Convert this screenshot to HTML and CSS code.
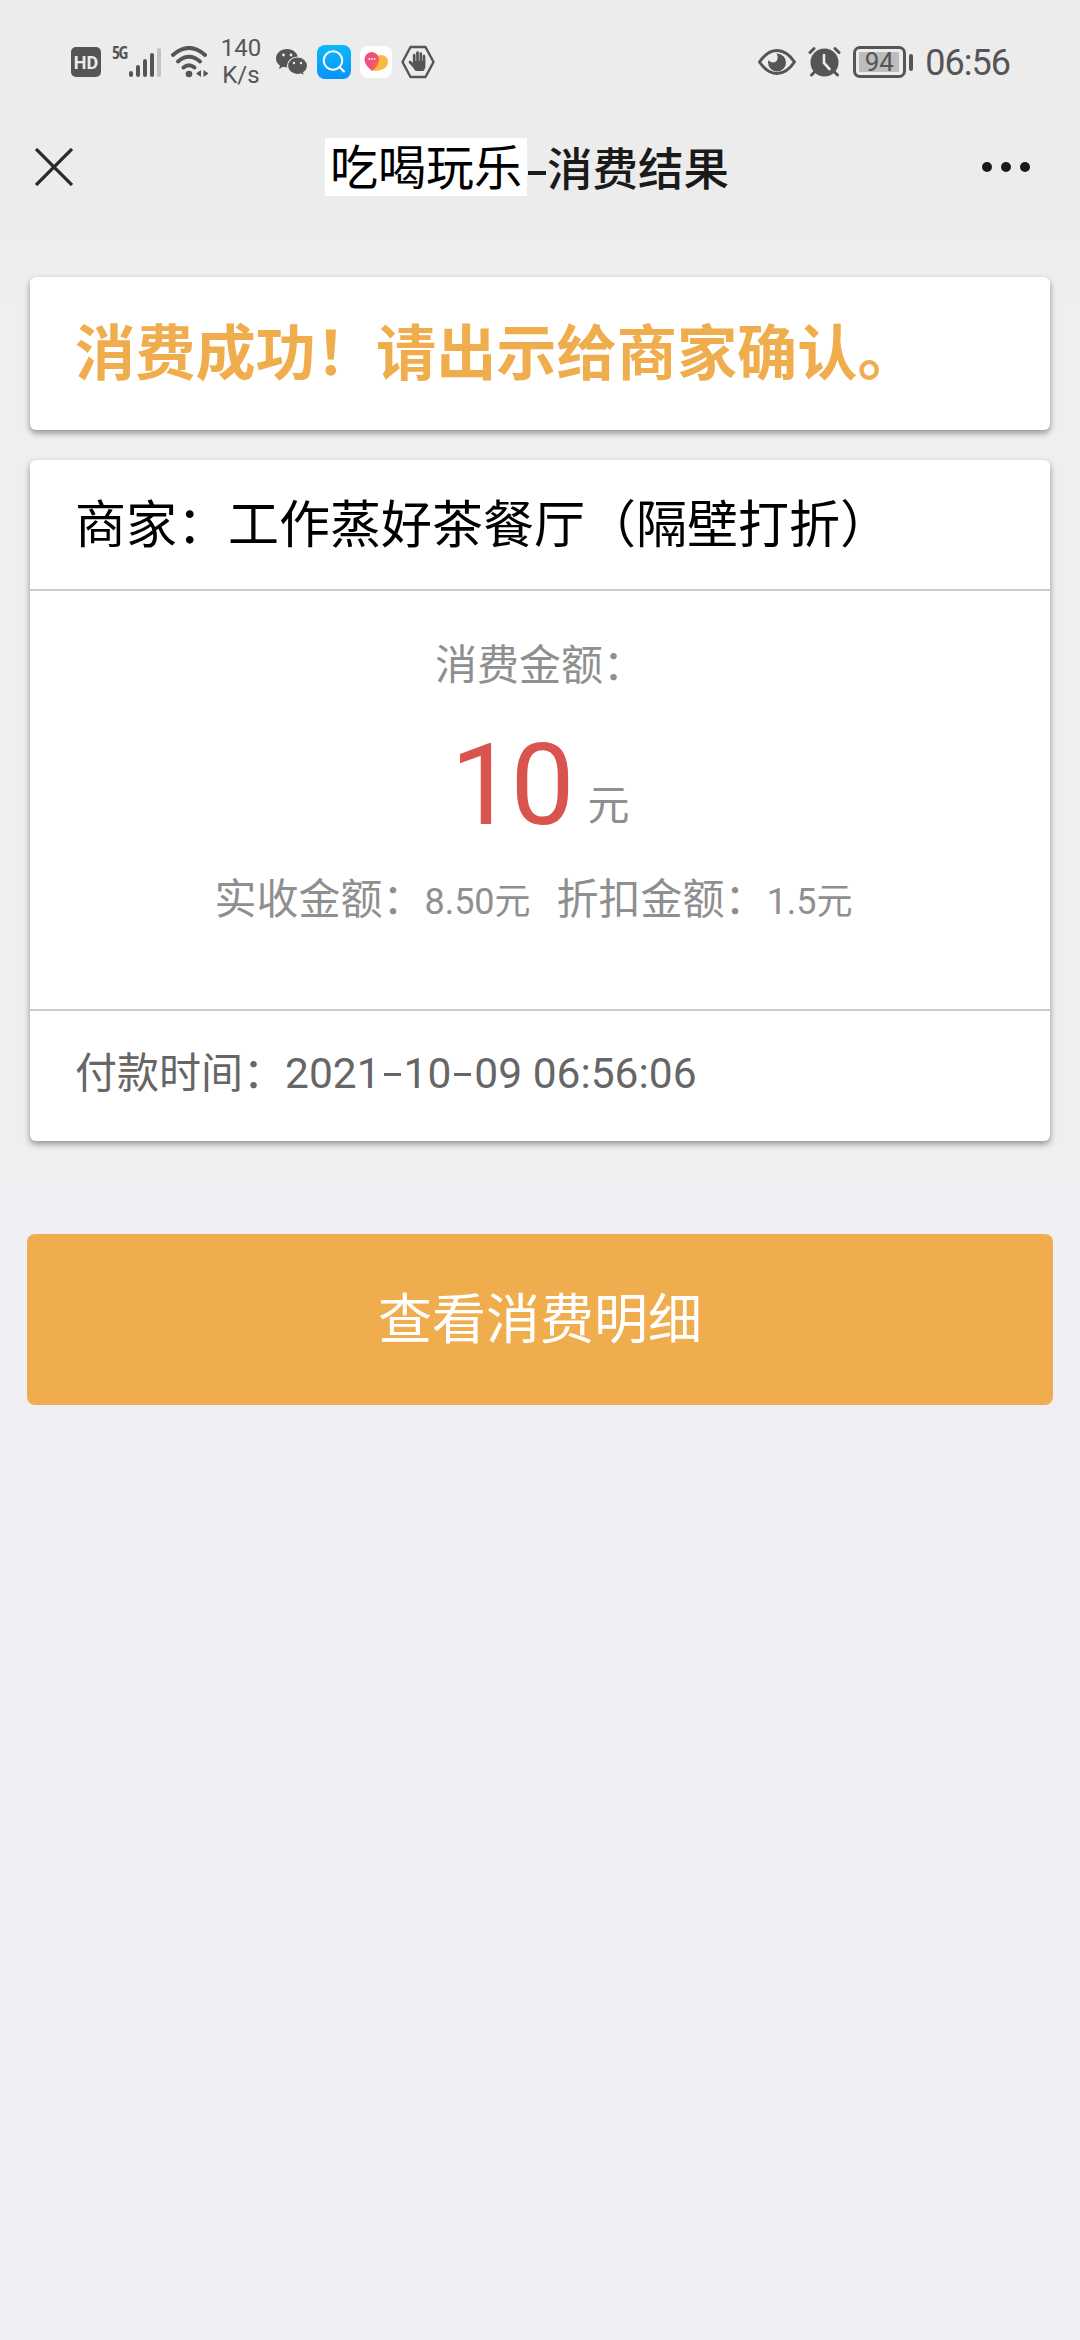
FILE: index.html
```html
<!doctype html>
<html lang="zh-CN">
	<head>
		<meta charset="utf-8">
		<title>吃喝玩乐-消费结果</title>
		<link rel="stylesheet" href="styles.css">
	</head>
	<body>
		<div class="statusbar">
			<div class="left">
				<div class="hd">HD</div>
				<div class="network">5G</div>
				<svg class="signal" width="34" height="32" viewBox="0 0 34 32">
					<g stroke="#555" stroke-width="4" stroke-linecap="round">
						<path d="M3 27v2M10 21v8M17 15v14M24 9v20"/>
						<path stroke="#c4c4c4" d="M31 4v25"/>
					</g>
				</svg>
				<svg class="wifi" width="38" height="32" viewBox="0 0 38 32">
					<g fill="none" stroke="#555" stroke-width="4" stroke-linecap="round">
						<path d="M2 9Q18 -5 34 9"/>
						<path d="M7 15.500Q18 6 29 15.500"/>
						<path d="M12.500 21.500Q18 17 23.500 21.500"/>
					</g>
					<circle cx="18" cy="28" r="3.300" fill="#555"/>
					<path fill="#555" d="M30 24v7l-5-3.500zM32.500 24v7l5-3.500z"/>
				</svg>
				<div class="speed">140<br>K/s</div>
				<svg class="wechat" width="32" height="28" viewBox="0 0 32 28">
					<path fill="#555" d="M11 1C5 1 0 5 0 10.500c0 3 1.500 5.500 4 7L3 21l4.200-2.200c1.200.4 2.500.5 3.800.5 6 0 11-4 11-9S17 1 11 1z"/>
					<path fill="#555" stroke="#ececec" stroke-width="1.200" d="M21.500 9C16 9 11.500 13 11.500 17.800s4.500 8.700 10 8.700c1.200 0 2.300-.2 3.400-.5l3.600 1.700-.8-3.100c2.300-1.700 3.800-4 3.800-6.800C31.500 13 27 9 21.500 9z"/>
					<g fill="#ececec">
						<circle cx="7.500" cy="7" r="1.400"/>
						<circle cx="15" cy="7" r="1.400"/>
						<circle cx="18" cy="15" r="1.200"/>
						<circle cx="25" cy="15" r="1.200"/>
					</g>
				</svg>
				<svg class="search" width="34" height="34" viewBox="0 0 34 34">
					<defs>
						<linearGradient id="blue" x2="0" y2="1">
							<stop stop-color="#0cb9f8"/>
							<stop offset="1" stop-color="#0793fa"/>
						</linearGradient>
					</defs>
					<rect width="34" height="34" rx="8" fill="url(#blue)"/>
					<g fill="none" stroke="#fff" stroke-width="2" stroke-linecap="round">
						<circle cx="16" cy="15.500" r="9.300"/>
						<path d="M22.500 22l4.500 4.500"/>
					</g>
				</svg>
				<svg class="heart" width="32" height="32" viewBox="0 0 32 32">
					<rect width="32" height="32" rx="8" fill="#fff"/>
					<path fill="#fcb93f" d="M14 25c9 0 14-4 14-9.500A6.500 6.500 0 0 0 21 9c-4 0-7 3-7 7z"/>
					<path fill="#ef5379" d="M12 25C6.500 20.500 4.500 16.500 4.500 13A7.500 7.500 0 0 1 12 6a7.500 7.500 0 0 1 7 7c0 4-2 8-7 12z"/>
					<path fill="#f56a3d" d="M12 25c4-3 6.700-8 7-12-3 1.500-5 4-6 7z"/>
					<path stroke="#fff" stroke-width="1.600" stroke-dasharray="1.600 1" d="M8.500 13h7"/>
				</svg>
				<svg class="hand" width="34" height="34" viewBox="0 0 34 34">
					<path fill="none" stroke="#555" stroke-width="2.400" stroke-linejoin="round" d="M9.500 2h15L32.500 17l-8 15h-15L1.500 17z"/>
					<g fill="none" stroke="#555" stroke-width="2.700" stroke-linecap="round">
						<path d="M13.200 17V10M16.500 17V7.500M19.800 17V8.500M23 17v-6M9 17l5 5.500"/>
					</g>
					<path fill="#555" d="M11.900 16h12.500v5c0 2.300-1 3.800-2 5h-7.500c-1.200-1-2.300-2.600-3-4z"/>
				</svg>
			</div>
			<div class="right">
				<svg class="eye" width="38" height="28" viewBox="0 0 38 28">
					<path fill="none" stroke="#555" stroke-width="3" stroke-linejoin="round" d="M1.500 14C7 6 12.500 2.500 19 2.500S31 6 36.500 14C31 22 25.500 25.500 19 25.500S7 22 1.500 14z"/>
					<circle cx="19" cy="14.500" r="9" fill="#555"/>
					<path fill="#ececec" d="M10 11.500c.5-3 3.500-6 7-7 3 1.500 3.500 6 1.500 8.500-2.500 2.500-6.500 1.500-8.500-1.500z"/>
				</svg>
				<svg class="alarm" width="33" height="31" viewBox="0 0 33 31">
					<circle cx="16.500" cy="16.500" r="14" fill="#555"/>
					<g fill="none" stroke="#555" stroke-width="3" stroke-linecap="round">
						<path d="M2 6.500L6 2.500M31 6.500l-4-4M6.500 26l-3 3M26.500 26l3 3"/>
					</g>
					<path fill="none" stroke="#ececec" stroke-width="2.600" stroke-linecap="round" d="M16 9v8l5.500 6"/>
				</svg>
				<div class="battery"><span>94</span></div>
				<div class="clock">06:56</div>
			</div>
		</div>

		<div class="navbar">
			<svg width="38" height="38" viewBox="0 0 38 38">
				<path fill="none" stroke="#2a2a2a" stroke-width="3.300" d="M1 1l36 36M37 1L1 37"/>
			</svg>
			<h1><span class="brand">吃喝玩乐</span><span class="dash"></span><span class="result">消费结果</span></h1>
			<svg width="50" height="12" viewBox="0 0 50 12">
				<g fill="#1a1a1a">
					<circle cx="6" cy="6" r="5"/>
					<circle cx="25" cy="6" r="5"/>
					<circle cx="44" cy="6" r="5"/>
				</g>
			</svg>
		</div>

		<div class="content">
			<div class="card success">消费成功！请出示给商家确认。</div>

			<div class="card">
				<div class="merchant">商家：工作蒸好茶餐厅（隔壁打折）</div>
				<div class="amount">
					<div class="label">消费金额：</div>
					<div class="total"><span class="number">10</span><span class="unit">元</span></div>
					<div class="detail">
						<span>实收金额：</span><span class="small paid">8.50元</span>
						<span>折扣金额：</span><span class="small">1.5元</span>
					</div>
				</div>
				<div class="time">付款时间：<span>2021<i></i>10<i></i>09 06:56:06</span></div>
			</div>

			<button>查看消费明细</button>
		</div>
	</body>
</html>
```

FILE: styles.css
```css
html, body {
	margin: 0;
	padding: 0;
	font-family: Roboto, "Noto Sans CJK SC", sans-serif;
}

body {
	min-height: 2340px;
	background: #efeff3 linear-gradient( #ededed 232px, #efeff0 300px, #efeff0 1150px, #efeff4 1230px );
}

svg { display: block; flex: none; }

/* status bar */
.statusbar {
	display: flex;
	justify-content: space-between;
	height: 122px;
	padding: 0 70px 0 71px;
	background-color: #ececec;
	color: #555;
}

.statusbar .left,
.statusbar .right {
	display: flex;
	align-items: center;
	height: 123px;
}

.hd {
	width: 30px;
	height: 30px;
	border-radius: 5px;
	background-color: #555;
	font-size: 18px;
	font-weight: bold;
	line-height: 31px;
	text-align: center;
	color: #ececec;
}

.network {
	width: 16px;
	margin: 0 0 18px 11px;
	font-family: "Open Sans", sans-serif;
	font-size: 17px;
	font-stretch: condensed;
	font-weight: bold;
	letter-spacing: -1.500px;
	line-height: 24px;
}

.signal { margin-left: 0; }
.wifi { margin-left: 9px; }

.speed {
	width: 42px;
	margin-left: 11px;
	font-size: 24px;
	line-height: 27px;
	text-align: center;
}

.wechat { margin-left: 14px; }
.search { margin-left: 9px; }
.heart { margin-left: 9px; }
.hand { margin-left: 9px; }

.alarm { margin-left: 12px; }

.battery {
	position: relative;
	box-sizing: border-box;
	width: 53px;
	height: 32px;
	margin-left: 12px;
	padding: 3px;
	border: 3px solid #555;
	border-radius: 7px;
}

.battery span {
	display: block;
	width: 40px;
	background-color: #bdbdbd;
	font-size: 26px;
	line-height: 20px;
	text-align: center;
}

.battery:after {
	content: "";
	position: absolute;
	top: 5px;
	right: -10px;
	width: 4px;
	height: 17px;
	border-radius: 2px;
	background-color: #555;
}

.clock {
	margin-left: 19px;
	padding-top: 2px;
	font-size: 36px;
	letter-spacing: -1px;
	line-height: 36px;
}

/* title bar */
.navbar {
	display: flex;
	align-items: center;
	justify-content: space-between;
	height: 90px;
	padding: 0 49px 22px 35px;
	background-color: #ececec;
}

.navbar h1 {
	display: flex;
	align-items: center;
	margin: 0;
	font-size: 45.500px;
	font-weight: 500;
	line-height: 58px;
	color: #1a1a1a;
}

.navbar .brand {
	height: 58px;
	padding: 0 5px 0 5px;
	background-color: white;
	font-size: 48px;
	font-weight: normal;
	line-height: 61px;
	color: black;
}

.navbar .dash {
	width: 18px;
	height: 4px;
	margin: 12px 1px 0 1px;
	background-color: #1a1a1a;
}

.navbar .result { padding-top: 8px; }

/* page */
.content { padding: 43px 30px 0; }

.card {
	margin-bottom: 30px;
	border-radius: 6px;
	background-color: white;
	box-shadow: 0 3px 6px rgba( 0, 0, 0, 0.4);
}

.success {
	padding: 2px 45px 0;
	font-size: 60.200px;
	font-weight: bold;
	line-height: 151px;
	color: #f0ad4e;
}

.merchant {
	padding: 2px 45px 0;
	border-bottom: 2px solid #ccc;
	font-size: 51px;
	line-height: 127px;
	color: black;
}

.amount {
	height: 364px;
	padding-top: 54px;
	border-bottom: 2px solid #ccc;
	font-size: 42px;
	line-height: 42px;
	text-align: center;
	color: #8f8f8f;
}

.total {
	display: flex;
	align-items: baseline;
	justify-content: center;
	height: 130px;
	margin-top: 33px;
	line-height: 130px;
}

.total .number {
	margin-right: 17px;
	font-size: 114px;
	letter-spacing: -4px;
	color: #d9534f;
}

.total .unit { transform: translateY(-4px); }

.detail {
	display: flex;
	align-items: baseline;
	justify-content: center;
	margin-top: 29px;
	padding-right: 13px;
}

.detail .small { font-size: 36px; }
.detail .paid { margin-right: 26px; }

.time {
	padding: 2px 45px 6px;
	font-size: 42px;
	line-height: 122px;
	color: #666;
}

.time span { font-size: 42.500px; }

.time i {
	display: inline-block;
	width: 17px;
	height: 3px;
	margin: 0 3px 12px;
	background-color: #666;
}

button {
	display: block;
	width: 1026px;
	height: 171px;
	margin: 93px 0 0 -3px;
	padding: 0 0 8px;
	border: 0 none;
	border-radius: 8px;
	background-color: #f0ad4e;
	font-family: inherit;
	font-size: 54px;
	color: white;
	cursor: pointer;
}
```
